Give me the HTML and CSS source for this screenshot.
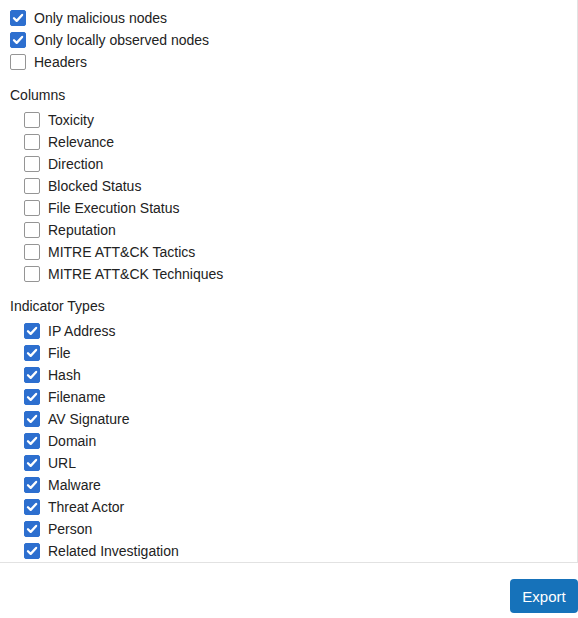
FILE: index.html
```html
<!DOCTYPE html>
<html>
<head>
<meta charset="utf-8">
<link rel="stylesheet" href="styles.css">
</head>
<body>
<div class="panel">
  <div class="options">
    <label class="row"><span class="box checked"><svg viewBox="0 0 16 16"><path d="M3.4 8.3 L6.5 11.3 L12.7 4.5"/></svg></span>Only malicious nodes</label>
    <label class="row"><span class="box checked"><svg viewBox="0 0 16 16"><path d="M3.4 8.3 L6.5 11.3 L12.7 4.5"/></svg></span>Only locally observed nodes</label>
    <label class="row"><span class="box"></span>Headers</label>
  </div>
  <div class="section-title">Columns</div>
  <div class="group">
    <label class="row"><span class="box"></span>Toxicity</label>
    <label class="row"><span class="box"></span>Relevance</label>
    <label class="row"><span class="box"></span>Direction</label>
    <label class="row"><span class="box"></span>Blocked Status</label>
    <label class="row"><span class="box"></span>File Execution Status</label>
    <label class="row"><span class="box"></span>Reputation</label>
    <label class="row"><span class="box"></span>MITRE ATT&amp;CK Tactics</label>
    <label class="row"><span class="box"></span>MITRE ATT&amp;CK Techniques</label>
  </div>
  <div class="section-title second">Indicator Types</div>
  <div class="group">
    <label class="row"><span class="box checked"><svg viewBox="0 0 16 16"><path d="M3.4 8.3 L6.5 11.3 L12.7 4.5"/></svg></span>IP Address</label>
    <label class="row"><span class="box checked"><svg viewBox="0 0 16 16"><path d="M3.4 8.3 L6.5 11.3 L12.7 4.5"/></svg></span>File</label>
    <label class="row"><span class="box checked"><svg viewBox="0 0 16 16"><path d="M3.4 8.3 L6.5 11.3 L12.7 4.5"/></svg></span>Hash</label>
    <label class="row"><span class="box checked"><svg viewBox="0 0 16 16"><path d="M3.4 8.3 L6.5 11.3 L12.7 4.5"/></svg></span>Filename</label>
    <label class="row"><span class="box checked"><svg viewBox="0 0 16 16"><path d="M3.4 8.3 L6.5 11.3 L12.7 4.5"/></svg></span>AV Signature</label>
    <label class="row"><span class="box checked"><svg viewBox="0 0 16 16"><path d="M3.4 8.3 L6.5 11.3 L12.7 4.5"/></svg></span>Domain</label>
    <label class="row"><span class="box checked"><svg viewBox="0 0 16 16"><path d="M3.4 8.3 L6.5 11.3 L12.7 4.5"/></svg></span>URL</label>
    <label class="row"><span class="box checked"><svg viewBox="0 0 16 16"><path d="M3.4 8.3 L6.5 11.3 L12.7 4.5"/></svg></span>Malware</label>
    <label class="row"><span class="box checked"><svg viewBox="0 0 16 16"><path d="M3.4 8.3 L6.5 11.3 L12.7 4.5"/></svg></span>Threat Actor</label>
    <label class="row"><span class="box checked"><svg viewBox="0 0 16 16"><path d="M3.4 8.3 L6.5 11.3 L12.7 4.5"/></svg></span>Person</label>
    <label class="row"><span class="box checked"><svg viewBox="0 0 16 16"><path d="M3.4 8.3 L6.5 11.3 L12.7 4.5"/></svg></span>Related Investigation</label>
  </div>
</div>
<div class="footer">
  <button class="export">Export</button>
</div>
</body>
</html>
```
FILE: styles.css
```css
html, body {
  margin: 0;
  padding: 0;
  background: #fff;
}
body {
  font-family: "Liberation Sans", Arial, sans-serif;
  font-size: 14px;
  color: #222;
  width: 578px;
}
.panel {
  box-sizing: border-box;
  width: 578px;
  height: 563px;
  padding: 7px 0 0 10px;
  border-right: 1px solid #e2e2e2;
  border-bottom: 1px solid #e2e2e2;
}
.options, .group {
  display: flex;
  flex-direction: column;
}
.group {
  padding-left: 14px;
}
.row {
  display: flex;
  align-items: center;
  gap: 8px;
  height: 22px;
  line-height: 22px;
}
.box {
  box-sizing: border-box;
  width: 16px;
  height: 16px;
  border: 1px solid #959595;
  border-radius: 2px;
  background: #fff;
  display: flex;
  align-items: center;
  justify-content: center;
  flex: none;
}
.box.checked {
  background: #2d6fcf;
  border-color: #2d6fcf;
}
.box svg {
  width: 16px;
  height: 16px;
  fill: none;
  stroke: #fff;
  stroke-width: 2.6;
  stroke-linecap: round;
  stroke-linejoin: round;
}
.section-title {
  height: 22px;
  line-height: 22px;
  margin-top: 11px;
  margin-bottom: 3px;
}
.section-title.second {
  margin-top: 10px;
}
.footer {
  display: flex;
  justify-content: flex-end;
  padding-top: 16px;
}
.export {
  width: 68px;
  height: 34px;
  border: none;
  border-radius: 4px;
  background: #1672ba;
  color: #fff;
  font-family: "Liberation Sans", Arial, sans-serif;
  font-size: 15px;
  padding: 0;
}
```
